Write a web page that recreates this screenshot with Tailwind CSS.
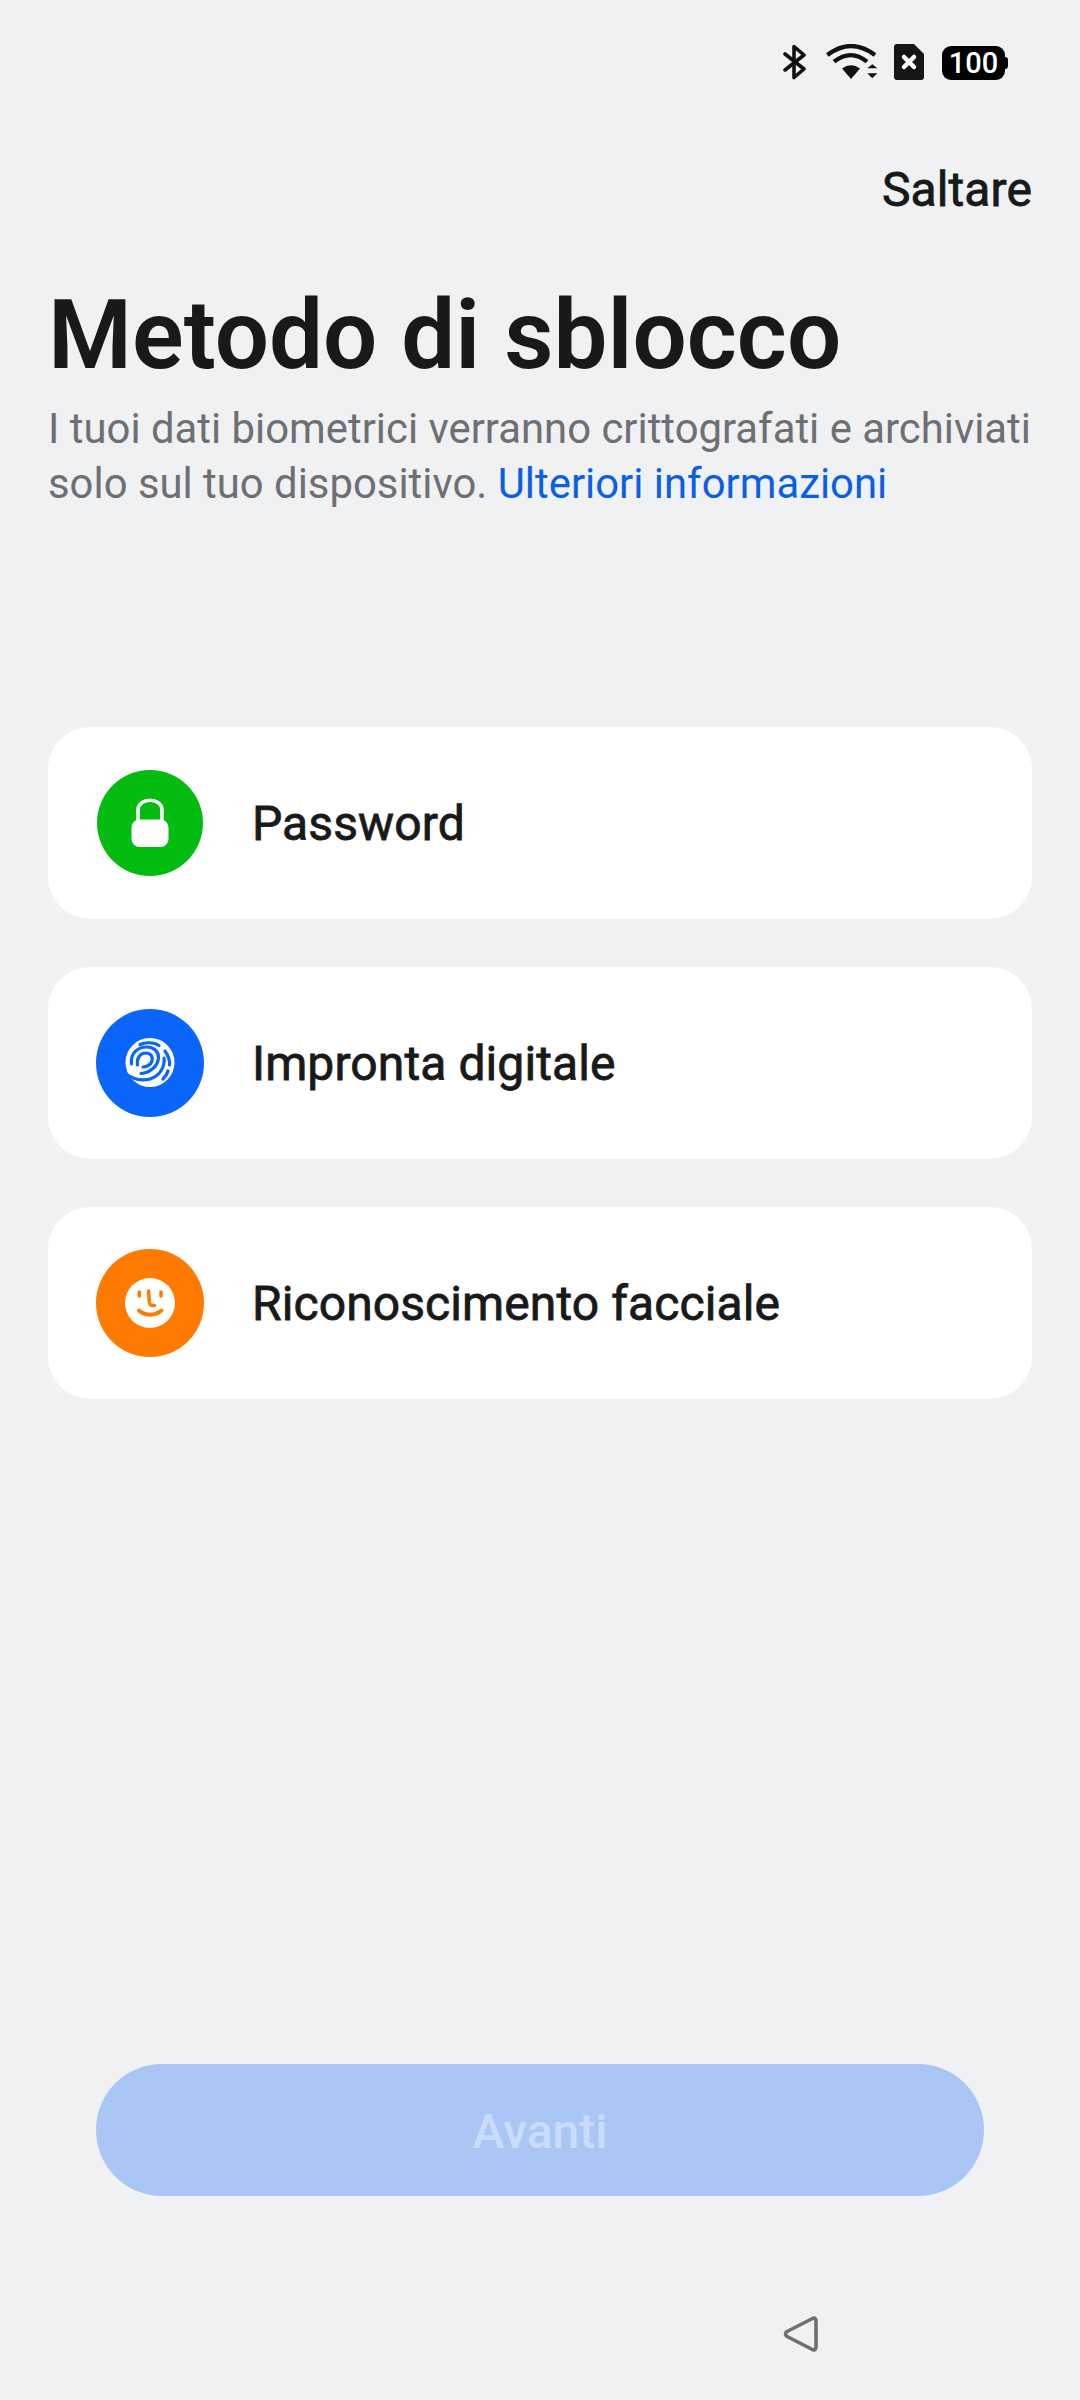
<!DOCTYPE html>
<html><head><meta charset="utf-8">
<script src="https://cdn.jsdelivr.net/npm/@tailwindcss/browser@4"></script>
</head>
<body class="m-0">
<div class="w-[1080px] h-[2400px] bg-[#f0f1f3] flex flex-col font-['Roboto',sans-serif] overflow-hidden">
  <!-- status bar -->
  <div class="h-[36px] mt-[44px] pr-[72px] flex justify-end items-center">
    <svg width="24" height="36" viewBox="0 0 24 36" fill="none" stroke="#111" stroke-width="3.600" stroke-linejoin="round" stroke-linecap="round"><path d="M2 10 L21 25 L11 33.500 V2.500 L21 11 L2 26"/></svg>
    <svg width="52" height="36" viewBox="0 0 52 36" class="ml-[19px]"><g fill="none" stroke="#111" stroke-width="4.200"><path d="M1.300 11 Q25 -7 49 11"/><path d="M8 17.700 Q25 4.500 41 17.700"/></g><path d="M16 24.500 Q25 18 34 24.500 L25 35Z" fill="#111"/><path d="M41.300 24.300 L46.300 20.300 L51.300 24.300Z M41.300 29.300 H51.300 L46.300 34.300Z" fill="#111"/></svg>
    <svg width="30" height="36" viewBox="0 0 30 36" class="ml-[16px]"><path d="M3 0 H20 L30 10 V33 Q30 36 27 36 H3 Q0 36 0 33 V3 Q0 0 3 0Z" fill="#161616"/><path d="M10 13 L20 23 M20 13 L10 23" stroke="#fff" stroke-width="4.500" stroke-linecap="round"/></svg>
    <div class="relative w-[63px] h-[34px] mt-[2px] ml-[18px] mr-[3px] bg-black rounded-[9px] flex items-center justify-center text-white text-[29px] leading-none font-medium">100<span class="absolute -right-[3px] top-[11px] w-[3px] h-[12px] bg-black rounded-r-[3px]"></span></div>
  </div>

  <!-- skip -->
  <div class="mt-[83px] px-[48px] flex justify-end">
    <span class="text-[48px] leading-[53px] tracking-[0.1px] [-webkit-text-stroke:0.8px_#191919] text-[#191919]">Saltare</span>
  </div>

  <!-- heading -->
  <div class="mt-[63px] px-[48px]">
    <h1 class="text-[96px] leading-[112px] font-semibold text-[#191919] m-0">Metodo di sblocco</h1>
    <p class="text-[41.850px] leading-[55px] text-[#6e6f72] mt-[10px] whitespace-nowrap">I tuoi dati biometrici verranno crittografati e archiviati<br>solo sul tuo dispositivo. <span class="text-[#0a5fe6]">Ulteriori informazioni</span></p>
  </div>

  <!-- options -->
  <div class="mt-[216px] px-[48px] flex flex-col gap-[48px]">
    <div class="h-[192px] bg-white rounded-[42px] flex items-center pl-[49px]">
      <div class="w-[106px] h-[106px] rounded-full bg-[#04bb10] flex items-center justify-center shrink-0">
        <svg width="38" height="50" viewBox="0 0 38 50"><path d="M7 27 V12 C7 -1 31 -1 31 12 V27" fill="none" stroke="#fff" stroke-width="3.600"/><rect x="0.500" y="21.500" width="37" height="27.500" rx="8" fill="#fff"/></svg>
      </div>
      <span class="ml-[49px] mt-[2px] text-[48px] tracking-[0.1px] [-webkit-text-stroke:0.8px_#191919] text-[#191919]">Password</span>
    </div>
    <div class="h-[192px] bg-white rounded-[42px] flex items-center pl-[48px]">
      <div class="w-[108px] h-[108px] rounded-full bg-[#0a65fb] flex items-center justify-center shrink-0">
        <svg width="50" height="50" viewBox="0 0 50 50"><circle cx="25" cy="24.500" r="24.500" fill="#fff"/><g fill="none" stroke="#0a65fb" stroke-width="3.200" stroke-linecap="round"><path d="M15 6.500 C20 4 29 4 34 7.500"/><path d="M40 13 C43.500 18 45 23 44.500 27"/><path d="M43 33 C42 37 40 39 38 41"/><path d="M1 36 C12 44 24 43 31 38 C37 34 40 26 39 20"/><path d="M6.500 26 C5 15 13 9 22 9 C29 9 34 14 33.500 20 C33 28 25 35 16 35.500"/><path d="M12.500 27 C11.500 20 15 15 21 15 C26 15 28 19 27 23 C26 27 21 29 18 29"/></g></svg>
      </div>
      <span class="ml-[48px] mt-[2px] text-[48px] tracking-[0.1px] [-webkit-text-stroke:0.8px_#191919] text-[#191919]">Impronta digitale</span>
    </div>
    <div class="h-[192px] bg-white rounded-[42px] flex items-center pl-[48px]">
      <div class="w-[108px] h-[108px] rounded-full bg-[#ff7a00] flex items-center justify-center shrink-0">
        <svg width="50" height="50" viewBox="0 0 50 50"><circle cx="25" cy="25" r="25" fill="#fff"/><g fill="none" stroke="#ff7a00" stroke-linecap="round" stroke-linejoin="round"><path d="M14.300 14 V18" stroke-width="3.500"/><path d="M36 14 V18" stroke-width="3.500"/><path d="M23.500 13 L24.500 25 Q25 28 29.500 27.500" stroke-width="3.500"/><path d="M14 32.500 C20 38 30 38 36.500 32.500" stroke-width="4"/></g></svg>
      </div>
      <span class="ml-[48px] mt-[2px] text-[48px] tracking-[0.1px] [-webkit-text-stroke:0.8px_#191919] text-[#191919]">Riconoscimento facciale</span>
    </div>
  </div>

  <div class="flex-1"></div>

  <!-- button -->
  <div class="px-[96px]">
    <div class="h-[132px] rounded-[66px] bg-[#a9c6f5] flex items-center justify-center pt-[3px] text-[48px] font-medium text-[#c9dcfa]">Avanti</div>
  </div>

  <!-- nav -->
  <div class="h-[204px] pt-[120px] pl-[783px]">
    <svg width="36" height="36" viewBox="0 0 36 36" fill="none" stroke="#6f6f6f" stroke-width="3.600" stroke-linejoin="round"><path d="M33 5 V31 Q33 35 29.500 33.500 L4 20.500 Q1 18 4 15.500 L29.500 2.500 Q33 1 33 5Z"/></svg>
  </div>
</div>
</body></html>
